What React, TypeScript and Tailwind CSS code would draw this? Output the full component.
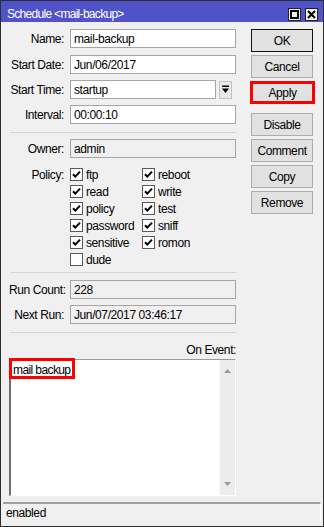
import React from "react";

const T = "text-[12px] tracking-[-0.4px] leading-none";

const Field = ({ value, ro = false }: { value: string; ro?: boolean }) => (
  <div
    className={`flex-1 h-[19px] border border-[#a5a5a5] flex items-center pl-[3px] ${T} text-[#000] whitespace-nowrap ${
      ro ? "bg-[#f0f0f0]" : "bg-white"
    }`}
  >
    {value}
  </div>
);

const Row = ({ label, children, mt }: { label: string; children: React.ReactNode; mt: string }) => (
  <div className={`flex items-center h-[19px] ${mt}`}>
    <div className={`w-[55px] text-right ${T} text-black whitespace-nowrap`}>{label}</div>
    <div className="w-[6px] shrink-0" />
    <div className="flex-1 flex items-center h-full">{children}</div>
  </div>
);

const Check = ({ label, checked = true }: { label: string; checked?: boolean }) => (
  <div className="flex items-center h-[17px]">
    <div className="w-[13px] h-[13px] border border-[#5a5a5a] bg-white flex items-center justify-center">
      {checked && (
        <svg width="11" height="11" viewBox="0 0 11 11">
          <path d="M2 5.2 L4.3 7.6 L9 2.6" stroke="#000" strokeWidth="2" fill="none" />
        </svg>
      )}
    </div>
    <span className={`ml-[3px] ${T} text-black`}>{label}</span>
  </div>
);

const Btn = ({ label, cls = "border border-[#adadad]", mt = "" }: { label: string; cls?: string; mt?: string }) => (
  <div className={`h-[23px] flex items-center justify-center bg-[#e1e1e1] ${T} text-black ${cls} ${mt}`}>
    {label}
  </div>
);

const Sep = ({ mt }: { mt: string }) => <div className={`h-[1px] bg-[#d5d5d5] ml-[1px] ${mt}`} />;

export default function App() {
  return (
    <div className="w-[324px] h-[527px] border border-[#2e2e2e] bg-[#f0f0f0] flex flex-col font-['Liberation_Sans',Arial,sans-serif] overflow-hidden">
      {/* title bar */}
      <div className="h-[21px] bg-[#5053c8] flex items-start shrink-0">
        <div className="pl-[6px] pt-[7px] text-[12px] leading-[13px] text-white tracking-[-0.7px]">
          Schedule &lt;mail-backup&gt;
        </div>
        <div className="ml-auto flex gap-[4px] pt-[7px] pr-[5px]">
          <div className="w-[13px] h-[13px] bg-[#f0f0f0] border border-[#222] flex items-center justify-center">
            <div className="w-[9px] h-[9px] border-[2px] border-black" />
          </div>
          <div className="w-[13px] h-[13px] bg-[#f0f0f0] border border-[#222] flex items-center justify-center">
            <svg width="9" height="9" viewBox="0 0 9 9">
              <path d="M1 1 L8 8 M8 1 L1 8" stroke="#000" strokeWidth="2" />
            </svg>
          </div>
        </div>
      </div>

      {/* body */}
      <div className="flex pt-[7px] pl-[8px] shrink-0">
        <div className="w-[227px] flex flex-col">
          <Row label="Name:" mt="mt-0">
            <Field value="mail-backup" />
          </Row>
          <Row label="Start Date:" mt="mt-[7px]">
            <Field value="Jun/06/2017" />
          </Row>
          <Row label="Start Time:" mt="mt-[6px]">
            <Field value="startup" />
            <div className="ml-[3px] w-[13px] h-[18px] border border-[#c2c2c2] bg-[#eaeaea] flex items-center justify-center mr-[4px]">
              <svg width="9" height="9" viewBox="0 0 9 9">
                <rect x="1" y="0.5" width="7" height="1.5" fill="#000" />
                <path d="M1 3.5 H8 L4.5 8 Z" fill="#000" />
              </svg>
            </div>
          </Row>
          <Row label="Interval:" mt="mt-[6px]">
            <Field value="00:00:10" />
          </Row>
          <Sep mt="mt-[8px]" />
          <Row label="Owner:" mt="mt-[6px]">
            <Field value="admin" ro />
          </Row>
          <div className="flex mt-[8px]">
            <div className={`w-[55px] h-[17px] flex items-center justify-end ${T} text-black`}>Policy:</div>
            <div className="w-[6px]" />
            <div className="flex">
              <div className="w-[72px] flex flex-col">
                <Check label="ftp" />
                <Check label="read" />
                <Check label="policy" />
                <Check label="password" />
                <Check label="sensitive" />
                <Check label="dude" checked={false} />
              </div>
              <div className="flex flex-col">
                <Check label="reboot" />
                <Check label="write" />
                <Check label="test" />
                <Check label="sniff" />
                <Check label="romon" />
              </div>
            </div>
          </div>
          <Sep mt="mt-[4px]" />
          <Row label="Run Count:" mt="mt-[7px]">
            <Field value="228" ro />
          </Row>
          <Row label="Next Run:" mt="mt-[6px]">
            <Field value="Jun/07/2017 03:46:17" ro />
          </Row>
          <Sep mt="mt-[8px]" />
          <div className={`mt-[8px] h-[17px] flex items-center justify-end ${T} text-black`}>On Event:</div>
          <div className="relative mt-[1px] h-[137px] flex border-t border-l-[2px] border-t-[#9a9a9a] border-l-[#6d6d6d] border-b border-r border-b-white border-r-white bg-white">
            <div className="flex-1 pl-[2px] pt-[4px] text-[12px] tracking-[-0.6px] leading-[13px] text-black">
              mail backup
            </div>
            <div className="w-[16px] bg-[#ececec] border-l border-[#f8f8f8] flex flex-col items-center justify-between py-[9px]">
              <svg width="7" height="4" viewBox="0 0 7 4">
                <path d="M0 4 L3.5 0 L7 4 Z" fill="#9a9a9a" />
              </svg>
              <svg width="7" height="4" viewBox="0 0 7 4">
                <path d="M0 0 L3.5 4 L7 0 Z" fill="#9a9a9a" />
              </svg>
            </div>
            <div className="absolute left-[-2px] top-[-2px] w-[66px] h-[21px] border-[3px] border-[#ff0000]" />
          </div>
        </div>

        <div className="ml-[15px] w-[62px] flex flex-col">
          <Btn label="OK" cls="border border-[#111]" />
          <Btn label="Cancel" mt="mt-[3px]" />
          <Btn label="Apply" cls="border-[3px] border-[#ff0000] w-[65px] ml-[-1px]" mt="mt-[3px]" />
          <Btn label="Disable" mt="mt-[9px]" />
          <Btn label="Comment" mt="mt-[3px]" />
          <Btn label="Copy" mt="mt-[3px]" />
          <Btn label="Remove" mt="mt-[3px]" />
        </div>
      </div>

      {/* status bar */}
      <div className={`mt-[6px] mx-[2px] h-[20px] border-t-[2px] border-t-[#a0a0a0] border-r border-r-white flex items-center pl-[3px] ${T} text-black`}>
        enabled
      </div>
    </div>
  );
}
